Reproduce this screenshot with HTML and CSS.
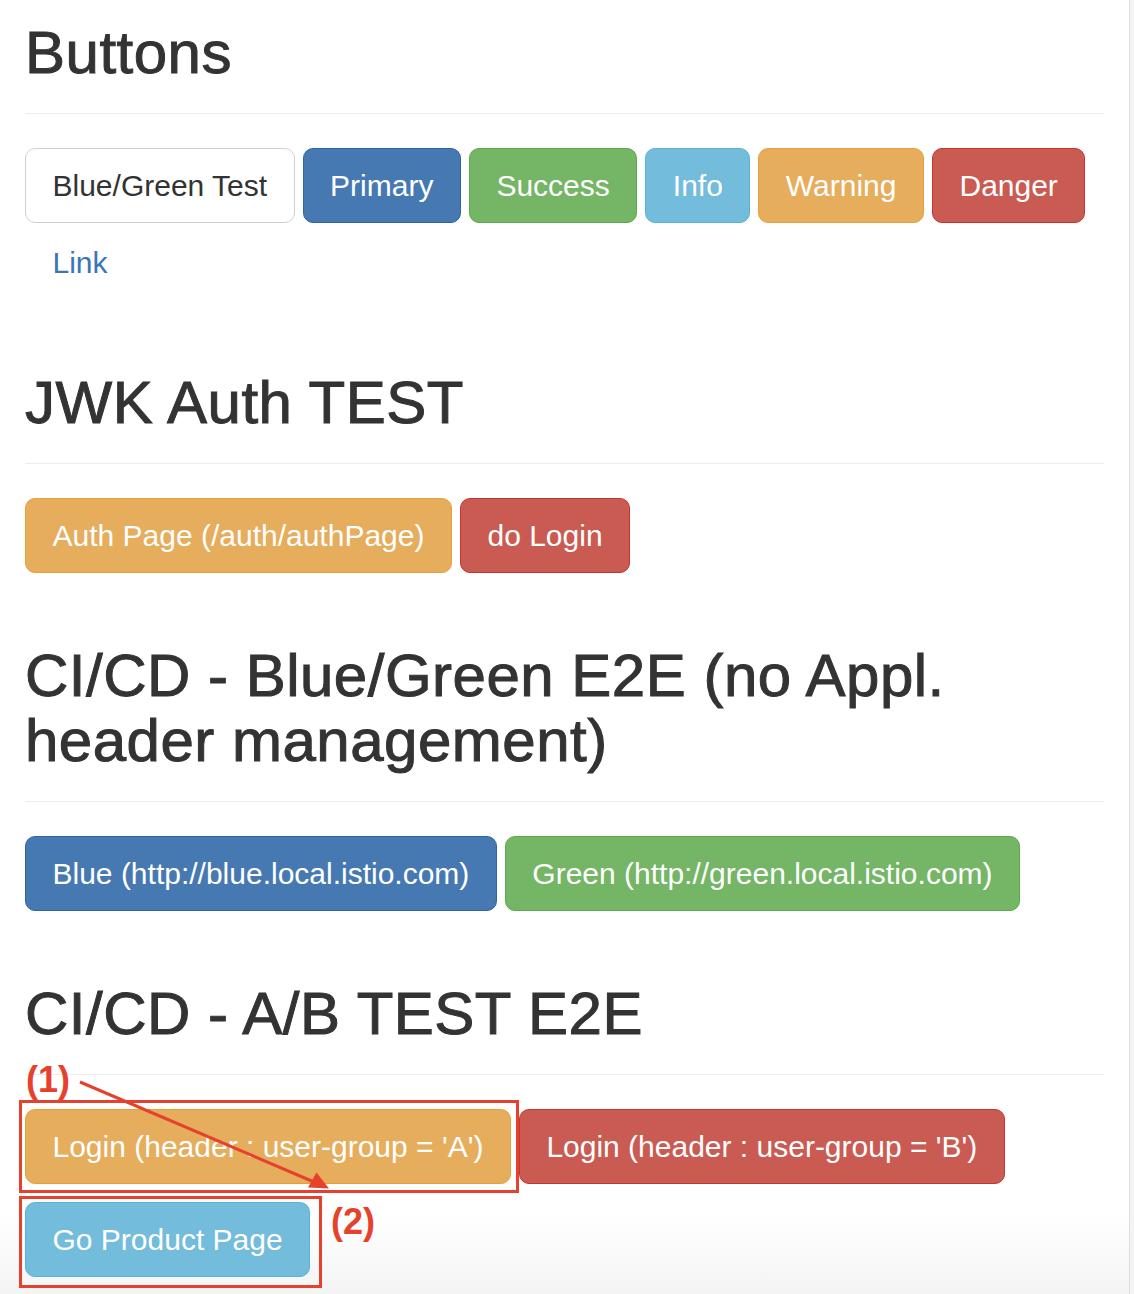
FILE: index.html
```html
<!DOCTYPE html>
<html lang="en">
<head>
<meta charset="utf-8">
<title>Buttons</title>
<link rel="stylesheet" href="styles.css">
</head>
<body>
<div class="page">
  <main class="container">
    <section class="section first">
      <div class="page-header"><h1>Buttons</h1></div>
      <div class="btn-row">
        <button class="btn btn-default">Blue/Green Test</button>
        <button class="btn btn-primary">Primary</button>
        <button class="btn btn-success">Success</button>
        <button class="btn btn-info">Info</button>
        <button class="btn btn-warning">Warning</button>
        <button class="btn btn-danger">Danger</button>
        <button class="btn btn-link">Link</button>
      </div>
    </section>

    <section class="section">
      <div class="page-header"><h1>JWK Auth TEST</h1></div>
      <div class="btn-row">
        <button class="btn btn-warning">Auth Page (/auth/authPage)</button>
        <button class="btn btn-danger">do Login</button>
      </div>
    </section>

    <section class="section">
      <div class="page-header"><h1>CI/CD - Blue/Green E2E (no Appl. header management)</h1></div>
      <div class="btn-row">
        <button class="btn btn-primary">Blue (http://blue.local.istio.com)</button>
        <button class="btn btn-success">Green (http://green.local.istio.com)</button>
      </div>
    </section>

    <section class="section">
      <div class="page-header"><h1>CI/CD - A/B TEST E2E</h1></div>
      <div class="btn-row">
        <button class="btn btn-warning">Login (header : user-group = 'A')</button>
        <button class="btn btn-danger">Login (header : user-group = 'B')</button>
      </div>
      <div class="btn-row product">
        <button class="btn btn-info">Go Product Page</button>
      </div>
    </section>
  </main>
  <div class="scroll-track"></div>

  <svg class="annotations" width="1134" height="1294" viewBox="0 0 1134 1294" aria-hidden="true">
    <rect x="20.5" y="1101.5" width="497" height="90" fill="none" stroke="#e6412c" stroke-width="3"/>
    <rect x="20.5" y="1197.5" width="300" height="89" fill="none" stroke="#e6412c" stroke-width="3"/>
    <line x1="80" y1="1082" x2="314" y2="1182" stroke="#e6412c" stroke-width="3"/>
    <polygon points="329,1188.5 316.5,1172.5 308,1187.5" fill="#e6412c"/>
  </svg>
  <span class="note note-1">(1)</span>
  <span class="note note-2">(2)</span>
</div>
</body>
</html>
```

FILE: styles.css
```css
html, body {
  margin: 0;
  padding: 0;
  height: 1294px;
  overflow: hidden;
}

body {
  font-family: "Liberation Sans", Arial, Helvetica, sans-serif;
  color: #333;
  background: linear-gradient(to bottom, #ffffff 0, #ffffff 1215px, #f4f4f4 1294px);
}

.page {
  position: relative;
  display: flex;
  height: 1294px;
}

.container {
  flex: 1;
  padding: 20px 25px 0 25px;
  box-sizing: border-box;
  max-width: 1129px;
}

.scroll-track {
  width: 4px;
  margin-left: auto;
  background: #f3f3f3;
  border-left: 1px solid #dedede;
}

.section {
  margin-top: 70px;
}

.section.first {
  margin-top: 0;
}

.page-header {
  padding-bottom: 28px;
  border-bottom: 1px solid #ececec;
  margin-bottom: 34px;
  width: 1079px;
}

.page-header h1 {
  margin: 0;
  font-size: 60px;
  line-height: 65px;
  font-weight: 500;
  letter-spacing: 0.5px;
  color: #333;
  -webkit-text-stroke: 1px #333;
}

.btn-row {
  display: flex;
  flex-wrap: wrap;
  column-gap: 8px;
  row-gap: 2px;
  width: 1079px;
}

.btn-row.product {
  margin-top: 18px;
}

.btn {
  font-family: "Liberation Sans", Arial, Helvetica, sans-serif;
  font-size: 30px;
  line-height: 40px;
  padding: 16.5px 26.5px;
  border: 1px solid transparent;
  border-radius: 10px;
  color: #fff;
  background: #fff;
  white-space: nowrap;
  cursor: pointer;
}

.btn-default {
  color: #333;
  background: #fff;
  border-color: #cfcfcf;
}

.btn-primary {
  background: #4679b2;
  border-color: #2f66a1;
}

.btn-success {
  background: #74b566;
  border-color: #5aa94b;
}

.btn-info {
  background: #73bcdb;
  border-color: #5ab2d6;
}

.btn-warning {
  background: #e6ad5d;
  border-color: #e6a03a;
}

.btn-danger {
  background: #c95b53;
  border-color: #c4352e;
}

.btn-link {
  background: transparent;
  border-color: transparent;
  color: #3a76b4;
}

.annotations {
  position: absolute;
  left: 0;
  top: 0;
  pointer-events: none;
}

.note {
  position: absolute;
  font-family: "Liberation Sans", Arial, sans-serif;
  font-weight: 700;
  font-size: 36px;
  line-height: 36px;
  color: #e6412c;
}

.note-1 {
  left: 26px;
  top: 1062px;
}

.note-2 {
  left: 331px;
  top: 1204px;
}
```
